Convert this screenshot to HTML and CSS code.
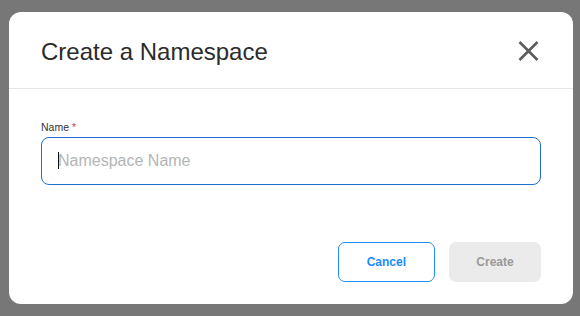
FILE: index.html
```html
<!DOCTYPE html>
<html lang="en">

<head>
    <meta charset="UTF-8" />
    <meta name="viewport" content="width=device-width, initial-scale=1.0" />
    <title>Create a Namespace</title>
    <link rel="stylesheet" href="styles.css">
</head>

<body>
    <div class="dialog">
        <div class="dialog-header">
            <div class="dialog-title">Create a Namespace</div>
            <button class="close-btn" aria-label="Close">
                <svg width="21" height="20" viewBox="0 0 21 20">
                    <path d="M1.5 1 L19.5 19 M19.5 1 L1.5 19" stroke="#5c5c5c" stroke-width="2.6" fill="none" />
                </svg>
            </button>
        </div>
        <div class="dialog-body">
            <label class="field-label" for="nsName">Name <span class="required">*</span></label>
            <div class="input-wrap">
                <input class="text-input" id="nsName" type="text" placeholder="Namespace Name">
                <span class="caret"></span>
            </div>
        </div>
        <div class="dialog-footer">
            <button class="btn btn-outline">Cancel</button>
            <button class="btn btn-disabled" disabled>Create</button>
        </div>
    </div>
</body>

</html>
```

FILE: styles.css
```css
body {
    margin: 0;
    padding: 12px 0 0 9px;
    background-color: #777777;
    font-family: "Liberation Sans", Arial, sans-serif;
    height: 316px;
    box-sizing: border-box;
    overflow: hidden;
}

.dialog {
    width: 564px;
    background-color: #ffffff;
    border-radius: 12px;
}

.dialog-header {
    display: flex;
    justify-content: space-between;
    align-items: flex-start;
    padding: 26px 34px 22px 32px;
    border-bottom: 1px solid #e6e6e6;
}

.dialog-title {
    font-size: 24px;
    line-height: 28px;
    color: #2b2b2b;
}

.close-btn {
    border: none;
    background: none;
    padding: 0;
    margin-top: 3px;
    width: 21px;
    height: 20px;
    cursor: pointer;
}

.close-btn svg {
    display: block;
}

.dialog-body {
    padding: 32px 32px 0;
}

.field-label {
    display: block;
    font-size: 10.5px;
    line-height: 13px;
    color: #333333;
    margin-bottom: 3px;
}

.required {
    color: #c9473f;
}

.input-wrap {
    position: relative;
}

.text-input {
    display: block;
    width: 100%;
    box-sizing: border-box;
    height: 48px;
    padding: 0 16px;
    border: 1px solid #1f6fcc;
    border-radius: 8px;
    font-family: "Liberation Sans", Arial, sans-serif;
    font-size: 16px;
    color: #222222;
    outline: none;
}

.text-input::placeholder {
    color: #b5b5b5;
}

/* focus caret in the empty field */
.caret {
    position: absolute;
    left: 17px;
    top: 15px;
    width: 1px;
    height: 17px;
    background-color: #111111;
}

.dialog-footer {
    display: flex;
    justify-content: flex-end;
    gap: 14px;
    padding: 57px 32px 22px;
}

.btn {
    height: 40px;
    font-family: "Liberation Sans", Arial, sans-serif;
    font-size: 12px;
    font-weight: bold;
    border-radius: 7px;
    cursor: pointer;
}

.btn-outline {
    padding: 0 28px;
    background-color: #ffffff;
    border: 1px solid #1e90ff;
    color: #1a8cff;
}

.btn-disabled {
    width: 92px;
    padding: 0;
    background-color: #ebebeb;
    border: none;
    color: #999999;
    cursor: default;
}
```
